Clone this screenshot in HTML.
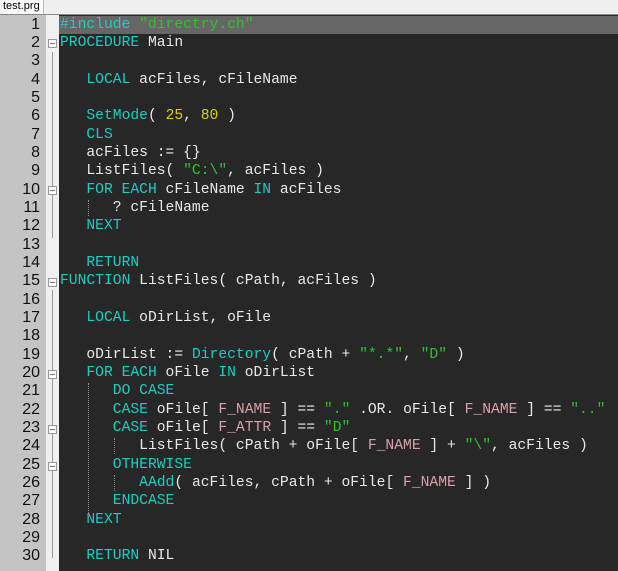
<!DOCTYPE html><html style="overflow:hidden;height:571px"><head><style>
body{margin:0;width:618px;height:571px;overflow:hidden;background:#272727;position:relative;font-family:"Liberation Mono",monospace;}
#tb{position:absolute;left:0;top:0;width:618px;height:15px;background:#efefef;border-bottom:1px solid #888;box-sizing:border-box}
#tab{position:absolute;left:0;top:0;width:44px;height:14px;background:#fafafa;border-right:1px solid #bbb;font:11px "Liberation Sans",sans-serif;color:#000;line-height:13px;padding-left:3px;box-sizing:border-box}
#gut{position:absolute;left:0;top:15px;width:46px;height:556px;background:#c4c4c4}
#fold{position:absolute;left:46px;top:15px;width:13px;height:556px;background:#f0f0f0}
.hl{position:absolute;left:59px;top:16px;width:559px;height:18px;background:#666}
.n{position:absolute;left:0;width:40px;text-align:right;font:16px "Liberation Sans",sans-serif;color:#111;height:18px;line-height:18px}
.c{position:absolute;left:60px;font-size:14.67px;line-height:18px;height:18px;color:#e8e8e8;white-space:pre}
.k{color:#1ccdc2}.s{color:#2bc42b}.y{color:#d8d000}.p{color:#d8a0a8}
.fl{position:absolute;background:#9a9a9a;width:1px;left:52px}
.bx{position:absolute;left:48px;width:9px;height:9px;border:1px solid #999;background:#fff;box-sizing:border-box}
.bx:after{content:"";position:absolute;left:1px;top:3px;width:5px;height:1px;background:#777}
.g{position:absolute;width:0;border-left:1px dotted #888}
</style></head><body>
<div id="tb"><div id="tab">test.prg</div></div>
<div id="gut"></div><div id="fold"></div>
<div class="hl"></div>
<div id="nums"></div>
<div class="fl" style="top:52px;height:186px"></div>
<div class="fl" style="top:290px;height:268px"></div>
<div class="bx" style="top:39px"></div>
<div class="bx" style="top:186px"></div>
<div class="bx" style="top:278px"></div>
<div class="bx" style="top:370px"></div>
<div class="bx" style="top:425px"></div>
<div class="bx" style="top:462px"></div>
<div class="g" style="left:88px;top:200px;height:16px"></div>
<div class="g" style="left:88px;top:383px;height:134px"></div>
<div class="g" style="left:114px;top:438px;height:16px"></div>
<div class="g" style="left:114px;top:475px;height:16px"></div>
<script>
var L=[
'<span style="color:#1ccdc2">#include</span> <span class="s">"directry.ch"</span>',
'<span class="k">PROCEDURE</span> Main','',
'   <span class="k">LOCAL</span> acFiles, cFileName','',
'   <span class="k">SetMode</span>( <span class="y">25</span>, <span class="y">80</span> )',
'   <span class="k">CLS</span>',
'   acFiles := {}',
'   ListFiles( <span class="s">"C:\\"</span>, acFiles )',
'   <span class="k">FOR EACH</span> cFileName <span class="k">IN</span> acFiles',
'      ? cFileName',
'   <span class="k">NEXT</span>','',
'   <span class="k">RETURN</span>',
'<span class="k">FUNCTION</span> ListFiles( cPath, acFiles )','',
'   <span class="k">LOCAL</span> oDirList, oFile','',
'   oDirList := <span class="k">Directory</span>( cPath + <span class="s">"*.*"</span>, <span class="s">"D"</span> )',
'   <span class="k">FOR EACH</span> oFile <span class="k">IN</span> oDirList',
'      <span class="k">DO CASE</span>',
'      <span class="k">CASE</span> oFile[ <span class="p">F_NAME</span> ] == <span class="s">"."</span> .OR. oFile[ <span class="p">F_NAME</span> ] == <span class="s">".."</span>',
'      <span class="k">CASE</span> oFile[ <span class="p">F_ATTR</span> ] == <span class="s">"D"</span>',
'         ListFiles( cPath + oFile[ <span class="p">F_NAME</span> ] + <span class="s">"\\"</span>, acFiles )',
'      <span class="k">OTHERWISE</span>',
'         <span class="k">AAdd</span>( acFiles, cPath + oFile[ <span class="p">F_NAME</span> ] )',
'      <span class="k">ENDCASE</span>',
'   <span class="k">NEXT</span>','',
'   <span class="k">RETURN</span> NIL'];
var h='';
for(var i=0;i<L.length;i++){var t=(15.5+i*18.34).toFixed(1);
h+='<div class="n" style="top:'+t+'px">'+(i+1)+'</div><div class="c" style="top:'+t+'px">'+L[i]+'</div>';}
document.getElementById('nums').innerHTML=h;
</script>
</body></html>
